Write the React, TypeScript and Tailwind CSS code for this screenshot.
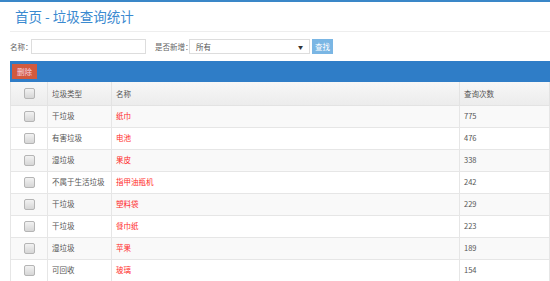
const rows = [
  { type: "干垃圾", name: "纸巾", count: 775 },
  { type: "有害垃圾", name: "电池", count: 476 },
  { type: "湿垃圾", name: "果皮", count: 338 },
  { type: "不属于生活垃圾", name: "指甲油瓶机", count: 242 },
  { type: "干垃圾", name: "塑料袋", count: 229 },
  { type: "干垃圾", name: "餐巾纸", count: 223 },
  { type: "湿垃圾", name: "苹果", count: 189 },
  { type: "可回收", name: "玻璃", count: 154 },
];

function Box() {
  return (
    <span className="block w-[11px] h-[11px] rounded-[2px] border border-[#b5b5b5] bg-gradient-to-b from-[#f2f2f2] to-[#d6d6d6]" />
  );
}

export default function App() {
  return (
    <div
      className="w-[550px] h-[281px] overflow-hidden bg-white border-t-2 border-[#3a87c8] text-[#555] text-[7.5px] whitespace-nowrap"
      style={{ fontFamily: '"Noto Sans CJK SC", "Noto Sans", sans-serif' }}
    >
      <div className="pl-[10px]">
        <div className="h-[30px] border-b border-[#eee] pl-[5px] flex items-center">
          <h1 className="text-[13.5px] leading-none text-[#3a8ad0] font-normal">首页 - 垃圾查询统计</h1>
        </div>

        <div className="h-[29px] flex items-center">
          <span className="w-[21px] text-[#666]">名称：</span>
          <input className="w-[115px] h-[15px] border border-[#ddd] outline-none" />
          <span className="ml-[9px] w-[34px] text-[#666]">是否新增：</span>
          <div className="w-[121px] h-[15px] border border-[#ddd] flex items-center justify-between px-[6px]">
            <span className="text-[#555]">所有</span>
            <span className="text-[5px] text-[#333]">▼</span>
          </div>
          <button className="ml-[2px] w-[21px] h-[15px] bg-[#7ab6e4] text-white text-[7.5px] leading-none">查找</button>
        </div>

        <div className="h-[21px] bg-[#2f7dc7] flex items-center pl-[2px]">
          <button className="w-[25px] h-[15px] bg-[#d25a3e] text-[#f6d3e6] text-[7.5px] leading-none">删除</button>
        </div>

        <table className="w-[540px] border-collapse table-fixed">
          <colgroup>
            <col className="w-[37px]" />
            <col className="w-[64px]" />
            <col className="w-[348px]" />
            <col />
          </colgroup>
          <thead>
            <tr className="h-[23px] bg-gradient-to-b from-[#f7f7f7] to-[#ececec]">
              <th className="border border-[#e3e3e3] border-t-0">
                <span className="flex justify-center"><Box /></span>
              </th>
              <th className="border border-[#e3e3e3] border-t-0 text-left font-normal pl-[4px]">垃圾类型</th>
              <th className="border border-[#e3e3e3] border-t-0 text-left font-normal pl-[4px]">名称</th>
              <th className="border border-[#e3e3e3] border-t-0 text-left font-normal pl-[4px]">查询次数</th>
            </tr>
          </thead>
          <tbody>
            {rows.map((r, i) => (
              <tr key={i} className={`h-[22px] ${i % 2 === 0 ? "bg-[#f9f9f9]" : "bg-white"}`}>
                <td className="border border-[#e6e6e6]">
                  <span className="flex justify-center"><Box /></span>
                </td>
                <td className="border border-[#e6e6e6] pl-[4px]">{r.type}</td>
                <td className="border border-[#e6e6e6] pl-[4px] text-[#ff2a2a]">{r.name}</td>
                <td className="border border-[#e6e6e6] pl-[4px]">{r.count}</td>
              </tr>
            ))}
          </tbody>
        </table>
      </div>
    </div>
  );
}
